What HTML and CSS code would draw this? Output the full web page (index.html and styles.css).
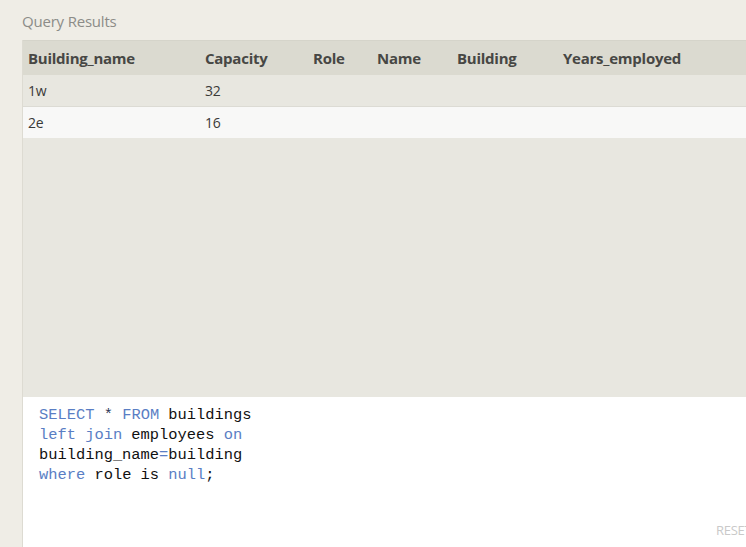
FILE: index.html
```html
<!DOCTYPE html>
<html>
<head>
<meta charset="utf-8">
<link rel="stylesheet" href="styles.css">
</head>
<body>
<div class="page">
  <div class="title">Query Results</div>
  <div class="panel">
    <div class="results">
      <table class="grid">
        <colgroup>
          <col class="c1"><col class="c2"><col class="c3"><col class="c4"><col class="c5"><col class="c6">
        </colgroup>
        <thead>
          <tr><th>Building_name</th><th>Capacity</th><th>Role</th><th>Name</th><th>Building</th><th>Years_employed</th></tr>
        </thead>
        <tbody>
          <tr class="odd"><td>1w</td><td>32</td><td></td><td></td><td></td><td></td></tr>
          <tr class="even"><td>2e</td><td>16</td><td></td><td></td><td></td><td></td></tr>
        </tbody>
      </table>
    </div>
    <div class="editor">
      <pre class="code"><span class="kw">SELECT</span> <span class="op">*</span> <span class="kw">FROM</span> buildings
<span class="kw">left join</span> employees <span class="kw">on</span>
building_name<span class="eq">=</span>building
<span class="kw">where</span> role is <span class="kw">null</span>;</pre>
      <div class="reset">RESET</div>
    </div>
  </div>
</div>
</body>
</html>
```
FILE: styles.css
```css
html, body {
  margin: 0;
  padding: 0;
  background: #efede6;
  overflow: hidden;
}
.page {
  width: 746px;
  height: 547px;
  font-family: "Open Sans", "Noto Sans", sans-serif;
  display: flex;
  flex-direction: column;
}
.title {
  height: 40px;
  box-sizing: border-box;
  padding: 11px 0 0 22px;
  font-size: 15px;
  line-height: 20px;
  color: #8c8c88;
  letter-spacing: -0.2px;
}
.panel {
  margin-left: 22px;
  width: 740px;
  flex: 1;
  display: flex;
  flex-direction: column;
  border-left: 1px solid #dddbd2;
}
.results {
  height: 357px;
  background: #e8e7e0;
}
.grid {
  border-collapse: collapse;
  table-layout: fixed;
  width: 740px;
}
.c1 { width: 177px; }
.c2 { width: 108px; }
.c3 { width: 64px; }
.c4 { width: 80px; }
.c5 { width: 106px; }
.grid th {
  background: #dbdad0;
  height: 34px;
  padding: 0 0 0 5px;
  box-sizing: border-box;
  text-align: left;
  font-size: 15px;
  font-weight: 700;
  color: #474744;
  letter-spacing: -0.25px;
  border-top: 1px solid #d5d4ca;
}
.grid td {
  height: 32px;
  padding: 0 0 0 5px;
  box-sizing: border-box;
  font-size: 14px;
  color: #3a3a38;
  letter-spacing: -0.2px;
}
.grid tr.odd td {
  background: #e8e7e0;
  border-bottom: 1px solid #dcdbd4;
}
.grid tr.even td {
  background: #f8f8f7;
  height: 31px;
}
.editor {
  flex: 1;
  background: #ffffff;
  position: relative;
}
.code {
  margin: 0;
  padding: 8px 0 0 16px;
  font-family: "Liberation Mono", "DejaVu Sans Mono", monospace;
  font-size: 15.4px;
  line-height: 20px;
  color: #111;
}
.kw { color: #5a7ec4; }
.op { color: #2c3555; }
.eq { color: #5a7ec4; }
.reset {
  position: absolute;
  left: 693px;
  top: 124px;
  font-size: 13px;
  color: #c9c9c9;
  letter-spacing: -0.3px;
}
```
